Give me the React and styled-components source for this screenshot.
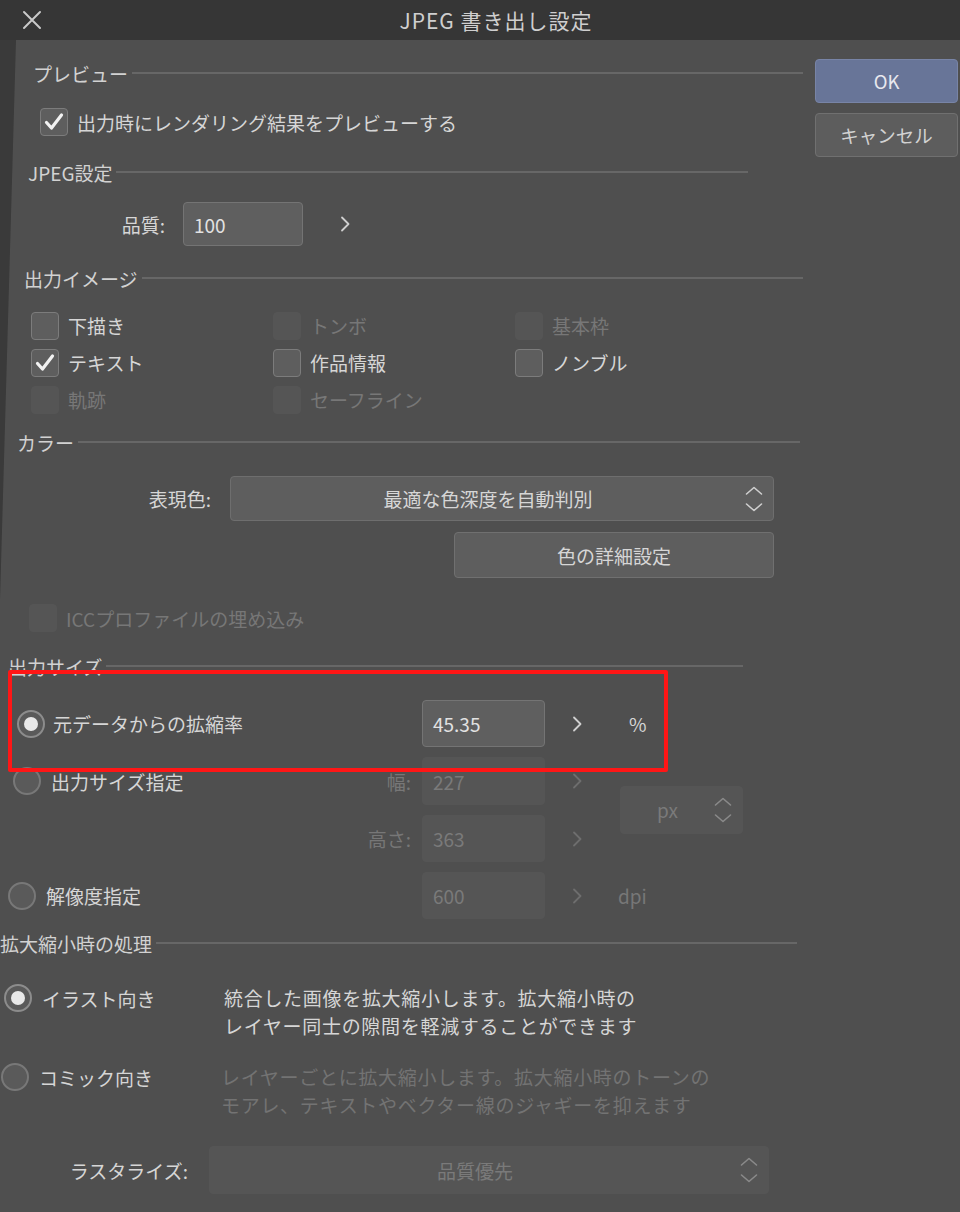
import React from 'react';
import styled, { createGlobalStyle } from 'styled-components';

const GlobalStyle = createGlobalStyle`
  body {
    margin: 0;
    background: #4f4f4f;
    font-family: "Noto Sans CJK JP", "Noto Sans", sans-serif;
  }
`;

const Dialog = styled.div`
  position: relative;
  width: 960px;
  min-height: 1212px;
  background: #4f4f4f;
  color: #d6d6d6;
  font-size: 19px;
  overflow: hidden;

  &::before {
    content: '';
    position: absolute;
    left: 0;
    top: 40px;
    width: 16px;
    height: 560px;
    background: #3a3a3a;
    clip-path: polygon(0 0, 100% 0, 0 100%);
  }
`;

const TitleBar = styled.div`
  height: 40px;
  background: #363636;
  display: grid;
  grid-template-columns: 64px 1fr 32px;
  align-items: center;
`;

const CloseButton = styled.div`
  display: flex;
  align-items: center;
  padding-left: 22px;
  height: 100%;
`;

const Title = styled.div`
  text-align: center;
  font-size: 21px;
  letter-spacing: 1px;
  color: #cfcfcf;
`;

const Body = styled.div`
  display: flex;
  align-items: flex-start;
`;

const Main = styled.div`
  width: 805px;
  padding-top: 20px;
  display: flex;
  flex-direction: column;
`;

const Side = styled.div`
  width: 143px;
  margin-left: 10px;
  padding-top: 19px;
  display: flex;
  flex-direction: column;
  gap: 10px;
`;

const SideButton = styled.div`
  height: 44px;
  box-sizing: border-box;
  border-radius: 4px;
  display: flex;
  align-items: center;
  justify-content: center;
  font-size: 18.5px;
  color: ${p => (p.$primary ? '#e8e8ee' : '#d2d2d2')};
  background: ${p => (p.$primary ? '#687598' : '#5d5d5d')};
  border: 1.5px solid ${p => (p.$primary ? '#7884a6' : '#707070')};
`;

const Header = styled.div`
  display: flex;
  align-items: center;
  height: 26px;
  margin-top: ${p => p.$mt || 0}px;
  padding-left: ${p => p.$indent}px;
  width: ${p => p.$end}px;
  box-sizing: border-box;
  color: #d2d2d2;
  white-space: nowrap;

  &::after {
    content: '';
    flex: 1;
    height: 2px;
    margin-left: 4px;
    background: #676767;
  }
`;

const Row = styled.div`
  display: flex;
  align-items: center;
  height: ${p => p.$h}px;
  margin-top: ${p => p.$mt || 0}px;
  padding-left: ${p => p.$indent || 0}px;
`;

const FieldLabel = styled.div`
  width: ${p => p.$w}px;
  margin-right: ${p => p.$gap}px;
  text-align: right;
  white-space: nowrap;
  color: ${p => (p.$disabled ? '#777' : '#d6d6d6')};
`;

const NumberField = styled.div`
  width: ${p => p.$w || 123}px;
  height: 100%;
  box-sizing: border-box;
  border-radius: 4px;
  display: flex;
  align-items: center;
  padding-left: 10px;
  background: ${p => (p.$disabled ? '#555555' : '#5f5f5f')};
  border: 1.5px solid ${p => (p.$disabled ? '#555555' : '#747474')};
  color: ${p => (p.$disabled ? '#7a7a7a' : '#e2e2e2')};
`;

const ChevronCell = styled.div`
  width: ${p => p.$w || 64}px;
  display: flex;
  justify-content: center;
  align-items: center;
`;

const Select = styled.div`
  width: ${p => p.$w}px;
  height: ${p => p.$h || 45}px;
  margin-left: ${p => p.$ml || 0}px;
  align-self: ${p => p.$self || 'auto'};
  box-sizing: border-box;
  border-radius: 4px;
  display: flex;
  align-items: center;
  background: ${p => (p.$disabled ? '#555555' : '#5e5e5e')};
  border: 1.5px solid ${p => (p.$disabled ? '#555555' : '#6e6e6e')};
  color: ${p => (p.$disabled ? '#7a7a7a' : '#d6d6d6')};
`;

const SelectText = styled.div`
  flex: 1;
  text-align: center;
`;

const SelectArrows = styled.div`
  width: 28px;
  display: flex;
  justify-content: flex-start;
`;

const WideButton = styled.div`
  width: 320px;
  height: 46px;
  box-sizing: border-box;
  border-radius: 4px;
  display: flex;
  align-items: center;
  justify-content: center;
  background: #5e5e5e;
  border: 1.5px solid #707070;
  color: #d6d6d6;
`;

const CheckGrid = styled.div`
  display: grid;
  grid-template-columns: repeat(3, 242px);
  grid-auto-rows: 37px;
  margin-top: ${p => p.$mt}px;
  padding-left: 31px;
`;

const CheckItem = styled.div`
  display: flex;
  align-items: center;
  gap: 9px;
  padding-left: ${p => p.$indent || 0}px;
  color: ${p => (p.$disabled ? '#777' : '#d6d6d6')};
`;

const Box = styled.span`
  width: 28px;
  height: 28px;
  box-sizing: border-box;
  border-radius: 4px;
  display: flex;
  align-items: center;
  justify-content: center;
  background: ${p => (p.$disabled ? '#555555' : '#5e5e5e')};
  border: 1.5px solid ${p => (p.$disabled ? '#555555' : '#7c7c7c')};
`;

const RadioDot = styled.span`
  width: 28px;
  height: 28px;
  flex: none;
  box-sizing: border-box;
  border-radius: 50%;
  display: flex;
  align-items: center;
  justify-content: center;
  background: #5a5a5a;
  border: 2px solid ${p => (p.$on ? '#8c8c8c' : '#787878')};

  &::after {
    content: '';
    display: ${p => (p.$on ? 'block' : 'none')};
    width: 14px;
    height: 14px;
    border-radius: 50%;
    background: #e8e8e8;
  }
`;

const RadioItem = styled.div`
  display: flex;
  align-items: center;
  gap: ${p => p.$gap || 9}px;
  padding-left: ${p => p.$indent || 0}px;
  white-space: nowrap;
  color: #d6d6d6;
`;

const SizeGrid = styled.div`
  display: grid;
  grid-template-columns: 422px 123px 64px 196px;
  grid-template-rows: 47px 48px 47px 47px;
  row-gap: 10px;
  margin-top: ${p => p.$mt}px;
`;

const SizeLeft = styled.div`
  display: flex;
  align-items: center;
  justify-content: ${p => (p.$end ? 'flex-end' : 'space-between')};
  padding-right: 11px;
`;

const Unit = styled.div`
  display: flex;
  align-items: center;
  padding-left: ${p => p.$pl}px;
  color: ${p => (p.$disabled ? '#777' : '#d6d6d6')};
`;

const ModeRow = styled.div`
  display: flex;
  align-items: flex-start;
  margin-top: ${p => p.$mt}px;
  padding-left: ${p => p.$indent}px;
`;

const ModeLeft = styled.div`
  width: 220px;
  height: 28px;
  display: flex;
  align-items: center;
`;

const ModeText = styled.div`
  line-height: 28px;
  letter-spacing: 0.7px;
  color: ${p => (p.$disabled ? '#737373' : '#d6d6d6')};
`;

const Annotation = styled.div`
  position: absolute;
  left: 8px;
  top: 670px;
  width: 660px;
  height: 102px;
  box-sizing: border-box;
  border: 4px solid #ff1616;
  border-radius: 2px;
  pointer-events: none;
`;

function Chevron({ disabled }) {
  return (
    <svg width="10" height="16" viewBox="0 0 10 16">
      <polyline points="2,1.5 8.5,8 2,14.5" fill="none" stroke={disabled ? '#6e6e6e' : '#d0d0d0'} strokeWidth="1.8" strokeLinecap="round" strokeLinejoin="round" />
    </svg>
  );
}

function UpDown({ disabled }) {
  const c = disabled ? '#8a8a8a' : '#cfcfcf';
  return (
    <svg width="18" height="26" viewBox="0 0 18 26">
      <polyline points="1.5,8 9,1.5 16.5,8" fill="none" stroke={c} strokeWidth="1.6" strokeLinecap="round" strokeLinejoin="round" />
      <polyline points="1.5,18 9,24.5 16.5,18" fill="none" stroke={c} strokeWidth="1.6" strokeLinecap="round" strokeLinejoin="round" />
    </svg>
  );
}

function Check({ label, state, indent }) {
  const disabled = state === 'disabled';
  return (
    <CheckItem $disabled={disabled} $indent={indent}>
      <Box $disabled={disabled}>
        {state === 'on' && (
          <svg width="22" height="22" viewBox="0 0 22 22">
            <polyline points="3.5,11.5 8.5,17 18.5,4" fill="none" stroke="#f2f2f2" strokeWidth="3.2" strokeLinecap="round" strokeLinejoin="round" />
          </svg>
        )}
      </Box>
      {label}
    </CheckItem>
  );
}

function Radio({ label, on, indent, gap }) {
  return (
    <RadioItem $indent={indent} $gap={gap}>
      <RadioDot $on={on} />
      {label}
    </RadioItem>
  );
}

const outputImage = [
  { label: '下描き', state: 'off' },
  { label: 'トンボ', state: 'disabled' },
  { label: '基本枠', state: 'disabled' },
  { label: 'テキスト', state: 'on' },
  { label: '作品情報', state: 'off' },
  { label: 'ノンブル', state: 'off' },
  { label: '軌跡', state: 'disabled' },
  { label: 'セーフライン', state: 'disabled' },
];

export default function App() {
  return (
    <>
      <GlobalStyle />
      <Dialog>
        <TitleBar>
          <CloseButton>
            <svg width="20" height="20" viewBox="0 0 20 20">
              <path d="M2 2 L18 18 M18 2 L2 18" stroke="#cacaca" strokeWidth="2" strokeLinecap="round" />
            </svg>
          </CloseButton>
          <Title>JPEG 書き出し設定</Title>
          <div />
        </TitleBar>
        <Body>
          <Main>
            <Header $indent={33} $end={803}>プレビュー</Header>
            <Row $h={36} $mt={18} $indent={40}>
              <Check label="出力時にレンダリング結果をプレビューする" state="on" />
            </Row>

            <Header $indent={28} $end={748} $mt={19}>JPEG設定</Header>
            <Row $h={44} $mt={17}>
              <FieldLabel $w={165} $gap={18}>品質:</FieldLabel>
              <NumberField $w={120}>100</NumberField>
              <ChevronCell $w={84}><Chevron /></ChevronCell>
            </Row>

            <Header $indent={24} $end={803} $mt={19}>出力イメージ</Header>
            <CheckGrid $mt={16}>
              {outputImage.map((item, i) => (
                <Check key={i} label={item.label} state={item.state} indent={i >= 6 ? 0 : 0} />
              ))}
            </CheckGrid>

            <Header $indent={17} $end={800} $mt={11}>カラー</Header>
            <Row $h={45} $mt={21}>
              <FieldLabel $w={211} $gap={19}>表現色:</FieldLabel>
              <Select $w={544}>
                <SelectText>最適な色深度を自動判別</SelectText>
                <SelectArrows><UpDown /></SelectArrows>
              </Select>
            </Row>
            <Row $h={46} $mt={11} $indent={454}>
              <WideButton>色の詳細設定</WideButton>
            </Row>
            <Row $h={28} $mt={26} $indent={29}>
              <Check label="ICCプロファイルの埋め込み" state="disabled" />
            </Row>

            <Header $indent={8} $end={743} $mt={21}>出力サイズ</Header>
            <SizeGrid $mt={21}>
              <SizeLeft>
                <Radio label="元データからの拡縮率" on indent={17} gap={8} />
              </SizeLeft>
              <NumberField>45.35</NumberField>
              <ChevronCell><Chevron /></ChevronCell>
              <Unit $pl={20}>%</Unit>

              <SizeLeft>
                <Radio label="出力サイズ指定" indent={13} gap={10} />
                <FieldLabel $disabled>幅:</FieldLabel>
              </SizeLeft>
              <NumberField $disabled>227</NumberField>
              <ChevronCell><Chevron disabled /></ChevronCell>
              <Unit $pl={11} style={{ gridRow: 'span 2' }}>
                <Select $w={123} $h={48} $disabled>
                  <SelectText>px</SelectText>
                  <SelectArrows><UpDown disabled /></SelectArrows>
                </Select>
              </Unit>

              <SizeLeft $end>
                <FieldLabel $disabled>高さ:</FieldLabel>
              </SizeLeft>
              <NumberField $disabled>363</NumberField>
              <ChevronCell><Chevron disabled /></ChevronCell>

              <SizeLeft>
                <Radio label="解像度指定" indent={8} gap={10} />
              </SizeLeft>
              <NumberField $disabled>600</NumberField>
              <ChevronCell><Chevron disabled /></ChevronCell>
              <Unit $pl={9} $disabled>dpi</Unit>
            </SizeGrid>

            <Header $indent={0} $end={797} $mt={11}>拡大縮小時の処理</Header>
            <ModeRow $mt={28} $indent={4}>
              <ModeLeft><Radio label="イラスト向き" on gap={10} /></ModeLeft>
              <ModeText>
                統合した画像を拡大縮小します。拡大縮小時の<br />
                レイヤー同士の隙間を軽減することができます
              </ModeText>
            </ModeRow>
            <ModeRow $mt={23} $indent={1}>
              <ModeLeft><Radio label="コミック向き" gap={10} /></ModeLeft>
              <ModeText $disabled>
                レイヤーごとに拡大縮小します。拡大縮小時のトーンの<br />
                モアレ、テキストやベクター線のジャギーを抑えます
              </ModeText>
            </ModeRow>
            <Row $h={48} $mt={27}>
              <FieldLabel $w={188} $gap={21}>ラスタライズ:</FieldLabel>
              <Select $w={560} $h={48} $disabled>
                <SelectText>品質優先</SelectText>
                <SelectArrows><UpDown disabled /></SelectArrows>
              </Select>
            </Row>
          </Main>
          <Side>
            <SideButton $primary>OK</SideButton>
            <SideButton>キャンセル</SideButton>
          </Side>
        </Body>
        <Annotation />
      </Dialog>
    </>
  );
}
